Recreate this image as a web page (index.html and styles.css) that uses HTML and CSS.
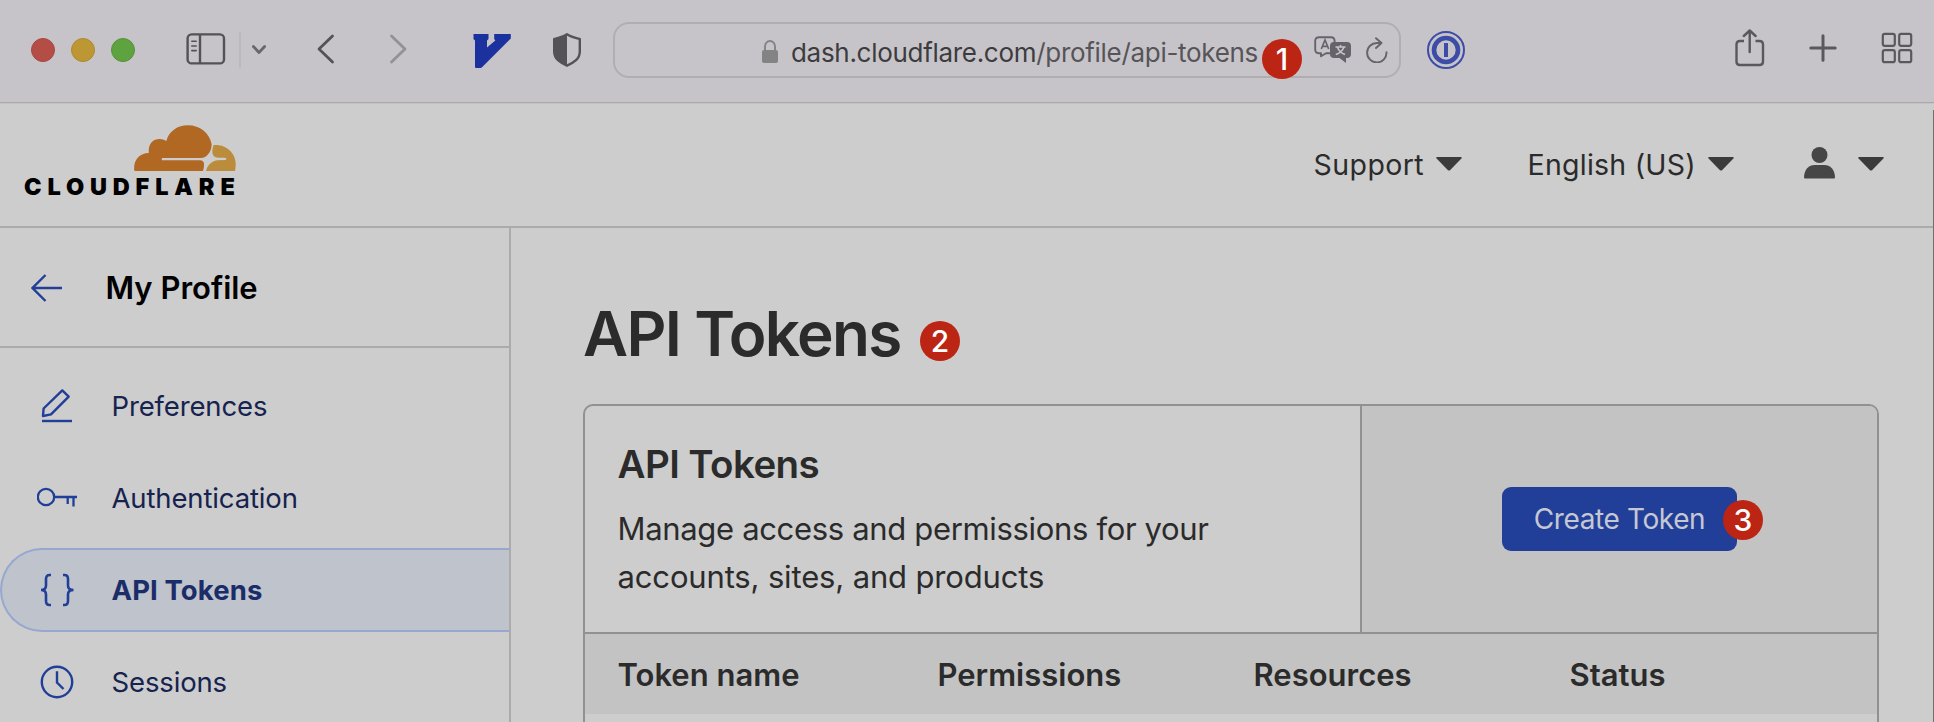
FILE: index.html
```html
<!DOCTYPE html>
<html lang="en">
<head>
<meta charset="utf-8">
<title>API Tokens | Cloudflare</title>
<link rel="stylesheet" href="styles.css">
</head>
<body>
<div class="window">
  <div class="toolbar">
    <div class="lights"><i class="light red"></i><i class="light yellow"></i><i class="light green"></i></div>
    <svg class="ic-sidebar" width="40" height="32" viewBox="0 0 40 32" fill="none" stroke="#545257" stroke-width="2.4"><rect x="1.6" y="1.4" width="36.4" height="29" rx="4"/><path d="M14 1.5v29"/><path d="M5.8 8.3h4.4M5.8 13h4.4M5.8 17.6h4.4" stroke-width="1.6" stroke-linecap="round"/></svg>
    <i class="split"></i>
    <svg class="ic-down" width="16" height="12" viewBox="0 0 16 12" fill="none" stroke="#69676c" stroke-width="2.8" stroke-linecap="round" stroke-linejoin="round"><path d="M2.4 2.5 8 8.5l5.6-6"/></svg>
    <svg class="ic-back" width="18" height="30" viewBox="0 0 18 30" fill="none" stroke="#545257" stroke-width="2.8" stroke-linecap="round" stroke-linejoin="round"><path d="M15.500 2 2 15l13.500 13"/></svg>
    <svg class="ic-fwd" width="18" height="30" viewBox="0 0 18 30" fill="none" stroke="#939196" stroke-width="2.8" stroke-linecap="round" stroke-linejoin="round"><path d="M2.500 2 16 15 2.500 28"/></svg>
    <svg class="ic-v" width="38" height="34" viewBox="0 0 38 34"><path fill="#1b329e" d="M.5 0H15.500V5L14 6.500V13.500L22.300 6.500 21.200 5V0H37.800V4.500L9 33.300Q8.300 34 7.500 34H3Q2 34 2 33V6.500L.5 5Z"/></svg>
    <svg class="ic-shield" width="30" height="34" viewBox="0 0 30 34"><path d="M15 1.300C10.500 4.400 6.500 5 2.200 6v12.500C2.200 26 8 29.500 15 32.700c7-3.200 12.800-6.700 12.800-14.200V6C23.500 5 19.500 4.400 15 1.300Z" fill="none" stroke="#545257" stroke-width="2.4" stroke-linejoin="round"/><path d="M15 1.300C10.500 4.400 6.500 5 2.200 6v12.500C2.200 26 8 29.500 15 32.700Z" fill="#545257"/></svg>
    <div class="urlbar">
      <svg class="ic-lock" width="16" height="23" viewBox="0 0 16 23"><rect y="10" width="16" height="13" rx="2" fill="#838285"/><path d="M3 11V6.500a5 5.500 0 0 1 10 0V11" fill="none" stroke="#838285" stroke-width="1.9"/></svg>
      <div class="url"><span class="host">dash.cloudflare.com</span><span class="path">/profile/api-tokens</span></div>
      <svg class="ic-translate" width="38" height="28" viewBox="0 0 38 28"><path d="M15.500 17.200H12L7 20.200v-3H5Q1.200 17.200 1.200 13.500V5Q1.200 1.200 5 1.200H17Q20.600 1.200 20.600 5V6" fill="none" stroke="#66646a" stroke-width="1.9" stroke-linecap="round" stroke-linejoin="round"/><path d="M7.300 13 11 4l3.700 9M8.600 10.300h4.800" fill="none" stroke="#66646a" stroke-width="1.7"/><path d="M20 6H33q4 0 4 4v8q0 4-4 4h-1v5l-6.500-5H20q-4 0-4-4v-8q0-4 4-4Z" fill="#66646a"/><path d="M21.500 11h10M26.500 9v2M23.500 11.500q2 5 7.500 7M29.800 11.500q-2 5-8 7" fill="none" stroke="#c7c4c9" stroke-width="1.6"/></svg>
      <svg class="ic-reload" width="22" height="26" viewBox="0 0 22 26" fill="none" stroke="#66646a" stroke-width="1.9" stroke-linecap="round" stroke-linejoin="round"><path d="M15.200 6H11A9.700 9.700 0 1 0 20.500 15.200M10 1.200 15.500 6 10 11"/></svg>
      <i class="badge b1">1</i>
    </div>
    <svg class="ic-pass" width="38" height="38" viewBox="0 0 38 38"><circle cx="19" cy="19" r="18" fill="none" stroke="#3c4da8" stroke-width="2"/><circle cx="19" cy="19" r="12" fill="none" stroke="#3c4da8" stroke-width="4.6"/><rect x="17" y="12" width="4" height="14" fill="#3c4da8"/></svg>
    <div class="tools">
      <svg width="30" height="38" viewBox="0 0 30 38" fill="none" stroke="#5a585d" stroke-width="2.4" stroke-linecap="round" stroke-linejoin="round"><path d="M9 12H5Q1.500 12 1.500 15.500V32.500Q1.500 36 5 36H24.500Q28 36 28 32.500V15.500Q28 12 24.500 12H20.500" stroke-linecap="butt"/><path d="M14.700 23V1.800M8.800 7 14.700 1.500 20.600 7"/></svg>
      <svg class="plus" width="28" height="28" viewBox="0 0 28 28" fill="none" stroke="#5a585d" stroke-width="3" stroke-linecap="round"><path d="M14 1.800v24.400M1.800 14h24.400"/></svg>
      <svg width="32" height="32" viewBox="0 0 32 32" fill="none" stroke="#5a585d" stroke-width="2.2"><rect x="1.800" y="1.800" width="12" height="12" rx="2"/><rect x="18.200" y="1.800" width="12" height="12" rx="2"/><rect x="1.800" y="18.200" width="12" height="12" rx="2"/><rect x="18.200" y="18.200" width="12" height="12" rx="2"/></svg>
    </div>
  </div>

  <header class="header">
    <div class="logo">
      <svg width="102" height="46" viewBox="0 0 102 46"><path fill="#b06823" d="M1.200 46Q.400 46 .200 45C-.600 35 5.500 28.200 14.800 28C14 19.500 18.500 14 25.500 14Q29.500 14 32.300 16C35 6 43.500.200 54 .200C66 .200 75.500 8 77.600 19C77.600 25 75 29.800 70.500 32.200Q69 33 67 33H28.500Q27.700 33 27.700 34.200T28.500 35.300H66Q69.700 35.700 70 38.500Q70.300 42 69 46Z"/><path fill="#bb8c3c" d="M79.500 20.200C91 18.700 101.700 27.500 101.700 39Q101.700 42.500 101 46H72C73.500 40 78 35.600 84 35.300L91.500 35Q92.500 34.500 92.500 33.700L91 32.800H84Q79 32.300 78.300 27.500Q78.200 24 79.500 20.200Z"/></svg>
      <div class="wordmark">CLOUDFLARE</div>
    </div>
    <nav class="menu">
      <div class="menu-item"><span class="support">Support</span><svg class="caret" width="26" height="14" viewBox="0 0 26 14"><path d="M1.200 0H24.800Q26.400.400 25.400 1.600L14 13.200Q13 14 12 13.200L.600 1.600Q-.400.400 1.200 0Z" fill="#3b3b3b"/></svg></div>
      <div class="menu-item lang"><span class="language">English (US)</span><svg class="caret" width="26" height="14" viewBox="0 0 26 14"><path d="M1.200 0H24.800Q26.400.400 25.400 1.600L14 13.200Q13 14 12 13.200L.600 1.600Q-.400.400 1.200 0Z" fill="#3b3b3b"/></svg></div>
      <div class="menu-item user"><svg class="person" width="31" height="32" viewBox="0 0 31 32" fill="#464646"><circle cx="15.500" cy="8" r="8"/><path d="M0 30.500C0 22.500 5 18 10.500 18h10C26 18 31 22.500 31 30.500q0 1-1 1H1q-1 0-1-1Z"/></svg><svg class="caret" width="26" height="14" viewBox="0 0 26 14"><path d="M1.200 0H24.800Q26.400.400 25.400 1.600L14 13.200Q13 14 12 13.200L.600 1.600Q-.400.400 1.200 0Z" fill="#3b3b3b"/></svg></div>
    </nav>
  </header>

  <div class="body">
    <aside class="sidebar">
      <div class="profile"><svg width="32" height="28" viewBox="0 0 32 28" fill="none" stroke="#213f98" stroke-width="2.4"><path d="M31 14H1.500M14.500 1 1.500 14l13 13"/></svg><span>My Profile</span></div>
      <ul class="nav">
        <li class="nav-item"><svg width="40" height="40" viewBox="0 0 40 40" fill="none" stroke="#213f98" stroke-width="2.4"><path d="M5 35h30"/><path d="M6 30 6.600 22.500 25.300 4.400 31.700 10.600 14 28.400Z" stroke-linejoin="round"/></svg><span>Preferences</span></li>
        <li class="nav-item"><svg width="40" height="40" viewBox="0 0 40 40" fill="none" stroke="#213f98" stroke-width="2.3"><circle cx="9" cy="19" r="8.200"/><path d="M17.200 19H40M30.700 19v7M36.500 19v9.500"/></svg><span>Authentication</span></li>
        <li class="nav-item active"><svg width="40" height="40" viewBox="0 0 40 40" fill="none" stroke="#213f98" stroke-width="2.6"><path d="M14 5H12.500Q9 5 9 9v6.500Q9 20 4 20q5 0 5 4.500V31q0 4 3.500 4H14M26 5h1.500Q31 5 31 9v6.500Q31 20 36.500 20 31 20 31 24.500V31q0 4-3.500 4H26"/></svg><span>API Tokens</span></li>
        <li class="nav-item"><svg width="40" height="40" viewBox="0 0 40 40" fill="none" stroke="#213f98" stroke-width="2.4"><circle cx="20" cy="20" r="15.200"/><path d="M20 9.200V20.500L26.500 27"/></svg><span>Sessions</span></li>
      </ul>
    </aside>
    <main class="main">
      <div class="title"><h1>API Tokens</h1><i class="badge b2">2</i></div>
      <section class="card">
        <div class="intro">
          <div class="about"><h2>API Tokens</h2><p><span class="line-a">Manage access and permissions for your</span><br><span class="line-b">accounts, sites, and products</span></p></div>
          <div class="action"><button class="create">Create Token<i class="badge b3">3</i></button></div>
        </div>
        <div class="thead"><span>Token name</span><span>Permissions</span><span>Resources</span><span>Status</span></div>
      </section>
    </main>
  </div>
  <i class="scroll"></i>
</div>
</body>
</html>
```
FILE: styles.css
```css
* { box-sizing: border-box; }
body { margin: 0; background: #cdcdcd; font-family: Inter, "Liberation Sans", sans-serif; color: #2b2b2b; }
i { font-style: normal; }
svg { display: block; flex: none; }
.window { position: relative; width: 1934px; height: 722px; overflow: hidden; display: flex; flex-direction: column; }

/* Browser toolbar */
.toolbar { height: 104px; flex: none; display: flex; align-items: flex-start; background: #c7c4c9; border-bottom: 1px solid #c2c2c2; box-shadow: inset 0 -1px #aaa; padding-left: 31px; }
.lights { display: flex; gap: 16px; margin-top: 38px; }
.light { width: 24px; height: 24px; border-radius: 50%; border: 1px solid; }
.red { background: #b54d47; border-color: #a8453f; }
.yellow { background: #bd9733; border-color: #ae8a2c; }
.green { background: #5fa240; border-color: #539336; }
.ic-sidebar { margin: 33px 0 0 51px; }
.split { width: 2px; height: 36px; background: #bbb9be; margin: 32px 0 0 13px; }
.ic-down { margin: 44px 0 0 10px; }
.ic-back { margin: 34px 0 0 50px; }
.ic-fwd { margin: 34px 0 0 54px; }
.ic-v { margin: 34px 0 0 66px; }
.ic-shield { margin: 33px 0 0 41px; }
.urlbar { position: relative; width: 788px; height: 56px; margin: 22px 0 0 31px; border: 2px solid #b0aeb1; border-radius: 16px; display: flex; align-items: flex-start; }
.ic-lock { margin: 16px 0 0 147px; }
.url { width: 467px; margin: 12px 0 0 13px; font-size: 26px; line-height: 34px; letter-spacing: -.3px; white-space: nowrap; color: #3c3c3e; }
.path { color: #555457; }
.ic-translate { margin: 12px 0 0 56px; }
.ic-reload { margin: 13px 0 0 14px; }
.ic-pass { margin: 31px 0 0 26px; }
.tools { display: flex; align-items: center; margin: 28px 0 0 270px; height: 40px; gap: 45px; }
.plus { margin: 0 -1px; }

.badge { position: absolute; width: 40px; height: 40px; border-radius: 50%; background: #bc2413; color: #fff; font-size: 30px; font-weight: 500; line-height: 41px; letter-spacing: 0; text-align: center; }
.b1 { left: 647px; top: 15px; }
.b2 { left: 920px; top: 321px; }
.b3 { left: 221px; top: 13px; }

/* Site header */
.header { height: 124px; flex: none; border-bottom: 2px solid #ababab; display: flex; justify-content: space-between; padding-right: 50px; }
.logo { margin: 21px 0 0 24px; width: 212px; }
.logo svg { margin-left: 109.5px; }
.wordmark { font-size: 23.5px; font-weight: 900; line-height: 24px; letter-spacing: 5.85px; margin-top: 4px; color: #000; white-space: nowrap; }
.menu { display: flex; align-items: center; font-size: 28.5px; padding-bottom: 2px; }
.menu-item { display: flex; align-items: center; gap: 12px; white-space: nowrap; }
.support { letter-spacing: .4px; }
.language { letter-spacing: .25px; }
.lang { margin-left: 65.5px; }
.user { margin-left: 70px; gap: 23px; }
.person { margin-bottom: 2px; }

/* Sidebar */
.body { flex: 1; display: flex; min-height: 0; }
.sidebar { width: 511px; flex: none; border-right: 2px solid #ababab; }
.profile { height: 120px; border-bottom: 2px solid #ababab; display: flex; align-items: center; gap: 42.5px; padding: 1px 0 0 31px; font-size: 31px; font-weight: 600; color: #000; }
.nav { list-style: none; margin: 16px 0 0; padding: 0; display: flex; flex-direction: column; gap: 8px; }
.nav-item { height: 84px; flex: none; border: 2px solid transparent; border-right: 0; border-radius: 42px 0 0 42px; display: flex; align-items: center; gap: 34.5px; padding-left: 35px; font-size: 27.5px; letter-spacing: -.14px; color: #16234f; }
.active { background: #bfc3cc; border-color: #96a8d0; font-weight: 700; letter-spacing: .1px; color: #1b2d69; }

/* Content */
.main { flex: 1; padding: 73px 54px 0 72px; }
.title { display: flex; height: 103px; }
h1 { margin: 0; font-size: 62px; line-height: 66px; font-weight: 600; letter-spacing: -1.65px; }
.card { width: 1296px; height: 400px; border: 2px solid #919191; border-radius: 10px; overflow: hidden; }
.intro { display: flex; height: 228px; border-bottom: 2px solid #919191; }
.about { width: 777px; border-right: 2px solid #919191; padding: 33px 0 0 32.5px; }
h2 { margin: 0; font-size: 38.5px; line-height: 50px; font-weight: 600; letter-spacing: -.6px; }
p { margin: 16px 0 0; font-size: 31px; line-height: 48px; white-space: nowrap; }
.line-a { letter-spacing: -.33px; }
.line-b { letter-spacing: -.15px; }
.action { flex: 1; background: #c3c3c3; display: flex; align-items: center; justify-content: center; }
.create { position: relative; width: 235px; height: 64px; border: 0; border-radius: 9px; background: #213f98; color: #c5c8d2; font: 28px Inter, "Liberation Sans", sans-serif; letter-spacing: -.4px; padding: 0; white-space: nowrap; }
.thead { height: 80px; background: #c3c3c3; display: grid; grid-template-columns: 320px 316px 316px 1fr; align-items: center; padding-left: 32.5px; font-size: 31px; font-weight: 600; }
.scroll { position: absolute; right: 0; top: 110px; width: 1px; bottom: 0; background: #707070; }
```
